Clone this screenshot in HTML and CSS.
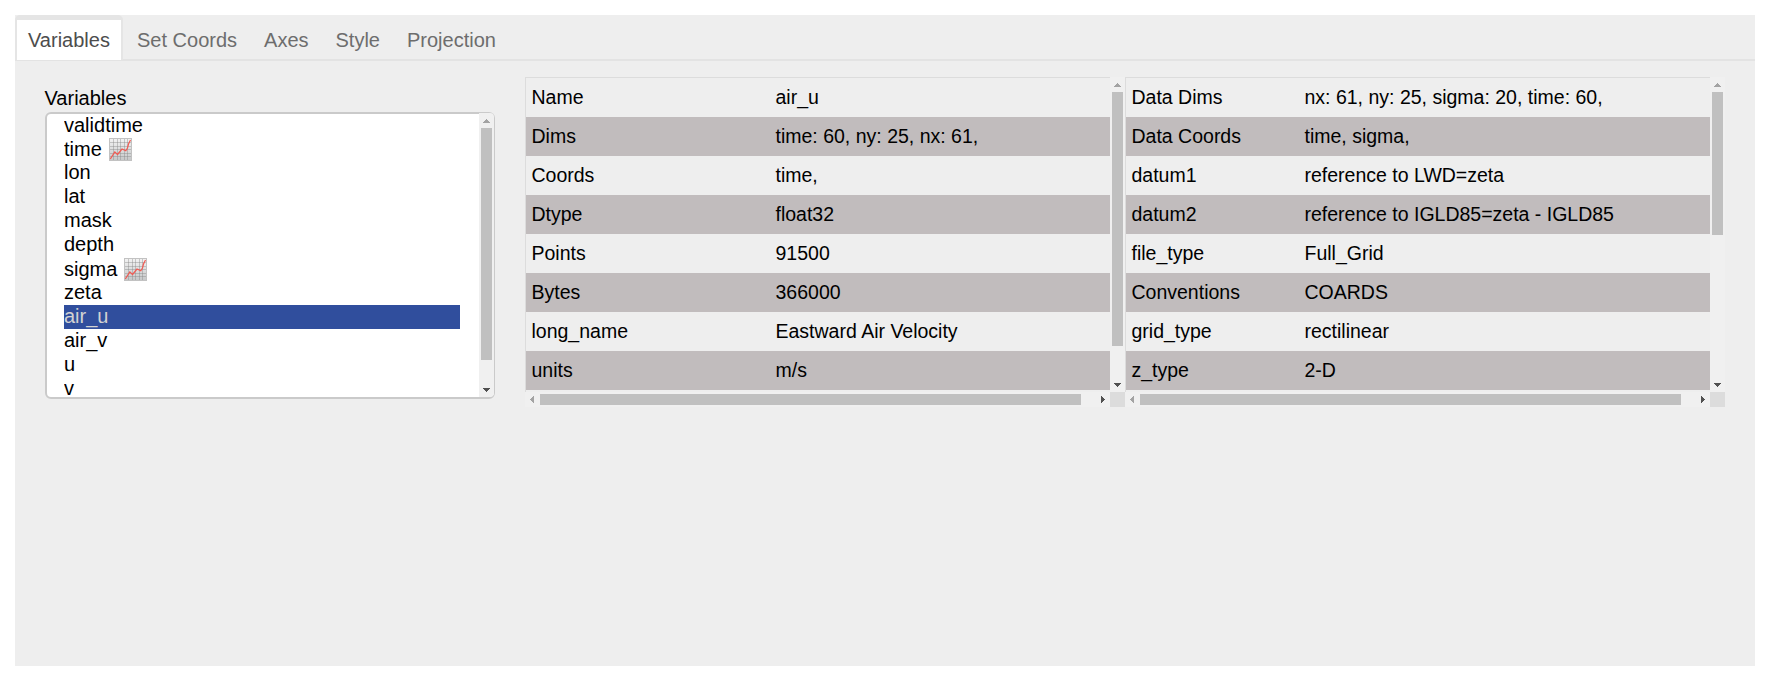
FILE: index.html
```
<!DOCTYPE html>
<html lang="en">
<head>
<meta charset="utf-8">
<title>Variables</title>
<link rel="stylesheet" href="styles.css">
</head>
<body>
<svg width="0" height="0" class="defs">
  <symbol id="up" viewBox="0 0 7 4"><path d="M3 0h1v1h1v1h1v1h1v1H0V3h1V2h1V1h1z"/></symbol>
  <symbol id="down" viewBox="0 0 7 4"><path d="M0 0h7v1H6v1H5v1H4v1H3V3H2V2H1V1H0z"/></symbol>
  <symbol id="left" viewBox="0 0 4 7"><path d="M4 0v7H3V6H2V5H1V4H0V3h1V2h1V1h1V0z"/></symbol>
  <symbol id="right" viewBox="0 0 4 7"><path d="M0 0v7h1V6h1V5h1V4h1V3H3V2H2V1H1V0z"/></symbol>
  <linearGradient id="paper" x1="0" y1="0" x2="0" y2="1"><stop offset="0" stop-color="#f3f3f3"/><stop offset="1" stop-color="#c5c7c8"/></linearGradient>
  <symbol id="chart" viewBox="0 0 23 23">
    <rect x=".5" y=".5" width="22" height="22" fill="url(#paper)" stroke="#c2c2c2"/>
    <path d="M4.5 1v21M8.5 1v21M11.5 1v21M15.5 1v21M18.5 1v21M1 4.500h21M1 8.500h21M1 11.500h21M1 15.500h21M1 18.500h21" stroke="#858585" stroke-opacity=".4" fill="none"/>
    <path d="M1.300 21L5.800 13.900l2.700 2.600L13 11l3.800 1.700L18.500 10l1-4L21.500 2" stroke="#f25a52" stroke-width="1.200" fill="none"/>
  </symbol>
</svg>
<main class="panel">
  <nav class="tabs">
    <a class="tab active">Variables</a><a class="tab">Set Coords</a><a class="tab">Axes</a><a class="tab">Style</a><a class="tab">Projection</a>
  </nav>
  <div class="content">
    <section class="picker">
      <label class="label">Variables</label>
      <div class="listbox">
        <ul class="options">
          <li>validtime</li>
          <li class="dim">time <svg class="chart"><use href="#chart"/></svg></li>
          <li>lon</li>
          <li>lat</li>
          <li>mask</li>
          <li>depth</li>
          <li class="dim">sigma <svg class="chart"><use href="#chart"/></svg></li>
          <li>zeta</li>
          <li class="selected">air_u</li>
          <li>air_v</li>
          <li>u</li>
          <li>v</li>
        </ul>
        <div class="vbar"><svg class="arrow-v off"><use href="#up"/></svg><i class="thumb list-thumb"></i><svg class="arrow-v end"><use href="#down"/></svg></div>
      </div>
    </section>
    <section class="info variable">
      <dl class="rows">
        <div><dt>Name</dt><dd>air_u</dd></div>
        <div><dt>Dims</dt><dd>time: 60, ny: 25, nx: 61, </dd></div>
        <div><dt>Coords</dt><dd>time, </dd></div>
        <div><dt>Dtype</dt><dd>float32</dd></div>
        <div><dt>Points</dt><dd>91500</dd></div>
        <div><dt>Bytes</dt><dd>366000</dd></div>
        <div><dt>long_name</dt><dd>Eastward Air Velocity</dd></div>
        <div><dt>units</dt><dd>m/s</dd></div>
      </dl>
      <div class="vbar"><svg class="arrow-v off"><use href="#up"/></svg><i class="thumb var-thumb"></i><svg class="arrow-v end"><use href="#down"/></svg></div>
      <div class="hbar"><svg class="arrow-h off"><use href="#left"/></svg><i class="thumb"></i><svg class="arrow-h end"><use href="#right"/></svg></div>
      <div class="corner"></div>
    </section>
    <section class="info dataset">
      <dl class="rows">
        <div><dt>Data Dims</dt><dd>nx: 61, ny: 25, sigma: 20, time: 60, </dd></div>
        <div><dt>Data Coords</dt><dd>time, sigma, </dd></div>
        <div><dt>datum1</dt><dd>reference to LWD=zeta</dd></div>
        <div><dt>datum2</dt><dd>reference to IGLD85=zeta - IGLD85</dd></div>
        <div><dt>file_type</dt><dd>Full_Grid</dd></div>
        <div><dt>Conventions</dt><dd>COARDS</dd></div>
        <div><dt>grid_type</dt><dd>rectilinear</dd></div>
        <div><dt>z_type</dt><dd>2-D</dd></div>
      </dl>
      <div class="vbar"><svg class="arrow-v off"><use href="#up"/></svg><i class="thumb data-thumb"></i><svg class="arrow-v end"><use href="#down"/></svg></div>
      <div class="hbar"><svg class="arrow-h off"><use href="#left"/></svg><i class="thumb"></i><svg class="arrow-h end"><use href="#right"/></svg></div>
      <div class="corner"></div>
    </section>
  </div>
</main>
</body>
</html>
```
FILE: styles.css
```
* { box-sizing: border-box; }
body { margin: 0; padding: 15px 20px 16px 15px; background: #fff; color: #000; font: 20px/24px "Liberation Sans", Arial, sans-serif; }
.defs { position: absolute; }
svg { display: block; }
.panel { width: 1740px; height: 651px; background: #eee; }

.tabs { display: flex; height: 46px; border-bottom: 2px solid #e3e3e3; }
.tab { height: 45px; padding: 13px 13px 0; margin-right: 1px; color: #6d6d6d; white-space: nowrap; }
.tab.active { width: 108px; padding: 8px 0 0 11px; background: #fff; color: #4d4d4d; border: solid #e5e5e5; border-width: 5px 2px 0; border-radius: 5px 5px 0 0; }

.content { display: flex; padding: 16px 30px 0; }
.picker { width: 450px; margin-right: 30px; padding-top: 9px; }
.label { display: block; height: 26px; margin-left: -0.5px; }
.listbox { display: flex; justify-content: space-between; height: 287px; border: solid #cacaca; border-width: 2px 1px 2px 2px; border-radius: 6px; background: #fff; }
.options { width: 396px; height: 283px; margin: 0 0 0 17px; padding: 0; list-style: none; overflow: hidden; }
.options li { height: 24px; line-height: 22px; }
.options li:first-child { height: 23px; }
.options .dim { display: flex; gap: 7px; line-height: 24px; }
.options .selected { background: #304e9d; color: #d2d2d2; }
.chart { width: 23px; height: 23px; margin-top: 1px; flex: none; }
.listbox .vbar { height: 284px; margin-top: -1px; border-radius: 0 4px 4px 0; }

.vbar { display: flex; flex-direction: column; width: 15px; padding: 6px 0 5px 4px; background: #f0f0f0; }
.arrow-v { width: 7px; height: 4px; flex: none; fill: #505050; }
.arrow-h { width: 4px; height: 7px; flex: none; fill: #505050; }
.off { fill: #a3a3a3; }
.end { margin-top: auto; }
.thumb { display: block; flex: none; background: #c0c0c0; }
.vbar .thumb { width: 11px; margin: 5px 0 0 -2px; }
.list-thumb { height: 232px; }
.var-thumb { height: 254px; }
.data-thumb { height: 143px; }

.info { display: grid; grid-template: 315px 15px / 585px 15px; font-size: 19.5px; }
.rows { margin: 0; border: solid #dcdcdc; border-width: 1px 0 0 1px; }
.rows div { display: grid; height: 39px; padding-left: 5.5px; line-height: 38px; white-space: nowrap; }
.variable .rows div { grid-template-columns: 244px 1fr; }
.dataset .rows div { grid-template-columns: 173px 1fr; }
.rows div:nth-child(even) { background: #c1bcbd; }
.rows dd { margin: 0; }
.hbar { display: flex; align-items: center; padding: 0 5px; background: #f0f0f0; }
.hbar .thumb { width: 541px; height: 11px; margin-left: 6px; }
.hbar .end { margin: 0 0 0 auto; }
.corner { background: #dcdcdc; }
```
